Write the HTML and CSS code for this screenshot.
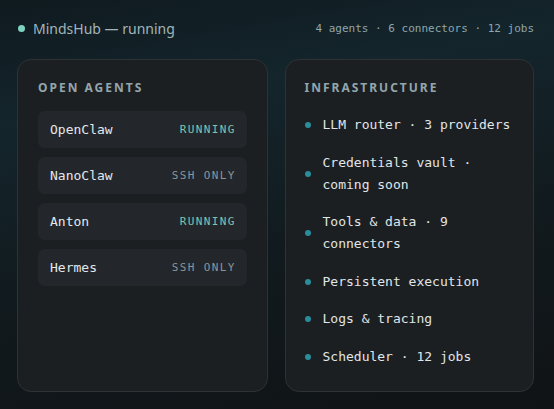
FILE: index.html
```html
<!DOCTYPE html>
<html>
<head>
    <title>MindsHub</title>
    <link rel="stylesheet" href="styles.css">
</head>
<body>
    <div class="topbar">
        <div class="status">
            <span class="status-dot"></span>
            <span class="status-text">MindsHub — running</span>
        </div>
        <div class="summary">4 agents · 6 connectors · 12 jobs</div>
    </div>

    <div class="panels">
        <div class="panel">
            <h2>Open Agents</h2>
            <div class="agent-list">
                <div class="agent">
                    <span class="agent-name">OpenClaw</span>
                    <span class="agent-state running">RUNNING</span>
                </div>
                <div class="agent">
                    <span class="agent-name">NanoClaw</span>
                    <span class="agent-state">SSH ONLY</span>
                </div>
                <div class="agent">
                    <span class="agent-name">Anton</span>
                    <span class="agent-state running">RUNNING</span>
                </div>
                <div class="agent">
                    <span class="agent-name">Hermes</span>
                    <span class="agent-state">SSH ONLY</span>
                </div>
            </div>
        </div>

        <div class="panel panel-infra">
            <h2>Infrastructure</h2>
            <ul class="infra-list">
                <li>LLM router · 3 providers</li>
                <li>Credentials vault · coming soon</li>
                <li>Tools &amp; data · 9 connectors</li>
                <li>Persistent execution</li>
                <li>Logs &amp; tracing</li>
                <li>Scheduler · 12 jobs</li>
            </ul>
        </div>
    </div>
</body>
</html>
```

FILE: styles.css
```css
html,
body {
    height: 100%;
}

body {
    margin: 0;
    padding: 18px 20px 17px 17px;
    box-sizing: border-box;
    font-family: "Noto Sans", sans-serif;
    background: linear-gradient(170deg, #0f1a1f 0%, #14252c 25%, #111a1e 60%, #101315 100%);
    color: #e0e6e8;
    display: flex;
    flex-direction: column;
}

.topbar {
    display: flex;
    justify-content: space-between;
    align-items: center;
    height: 20px;
    margin-bottom: 21px;
}

.status {
    display: flex;
    align-items: center;
}

.status-dot {
    width: 7px;
    height: 7px;
    border-radius: 50%;
    background-color: #7ed3bf;
    margin-left: 1px;
    margin-right: 8px;
}

.status-text {
    font-size: 14px;
    color: #a2b6ba;
}

.summary {
    font-family: "DejaVu Sans Mono", monospace;
    font-size: 11px;
    color: #8fa6ab;
}

.panels {
    flex: 1;
    display: flex;
    gap: 17px;
}

.panel {
    flex: 1;
    background-color: #1c1f22;
    border: 1px solid #2e3235;
    border-radius: 14px;
    padding: 20px 20px;
}

.panel-infra {
    padding-left: 19px;
}

h2 {
    margin: 0 0 15px;
    font-size: 12px;
    line-height: 16px;
    font-weight: bold;
    letter-spacing: 2px;
    text-transform: uppercase;
    color: #93a6ac;
}

.agent-list {
    display: flex;
    flex-direction: column;
    gap: 9px;
}

.agent {
    display: flex;
    justify-content: space-between;
    align-items: center;
    height: 37px;
    padding: 0 12px;
    background-color: #23272b;
    border-radius: 7px;
    font-family: "DejaVu Sans Mono", monospace;
}

.agent-name {
    font-size: 13px;
    color: #e3e9eb;
}

.agent-state {
    font-size: 11px;
    letter-spacing: 1.4px;
    margin-right: -1.4px;
    color: #8a9598;
}

.agent-state.running {
    color: #80c3a7;
}

.infra-list {
    list-style: none;
    margin: 18px 0 0;
    padding: 0;
    display: flex;
    flex-direction: column;
    gap: 15.6px;
    font-family: "DejaVu Sans Mono", monospace;
    font-size: 13px;
    line-height: 22px;
    color: #e0e6e8;
}

.infra-list li {
    display: flex;
    align-items: center;
}

.infra-list li::before {
    content: "";
    flex: none;
    width: 6px;
    height: 6px;
    border-radius: 50%;
    background-color: #2a8d9b;
    margin-right: 12px;
}
```
